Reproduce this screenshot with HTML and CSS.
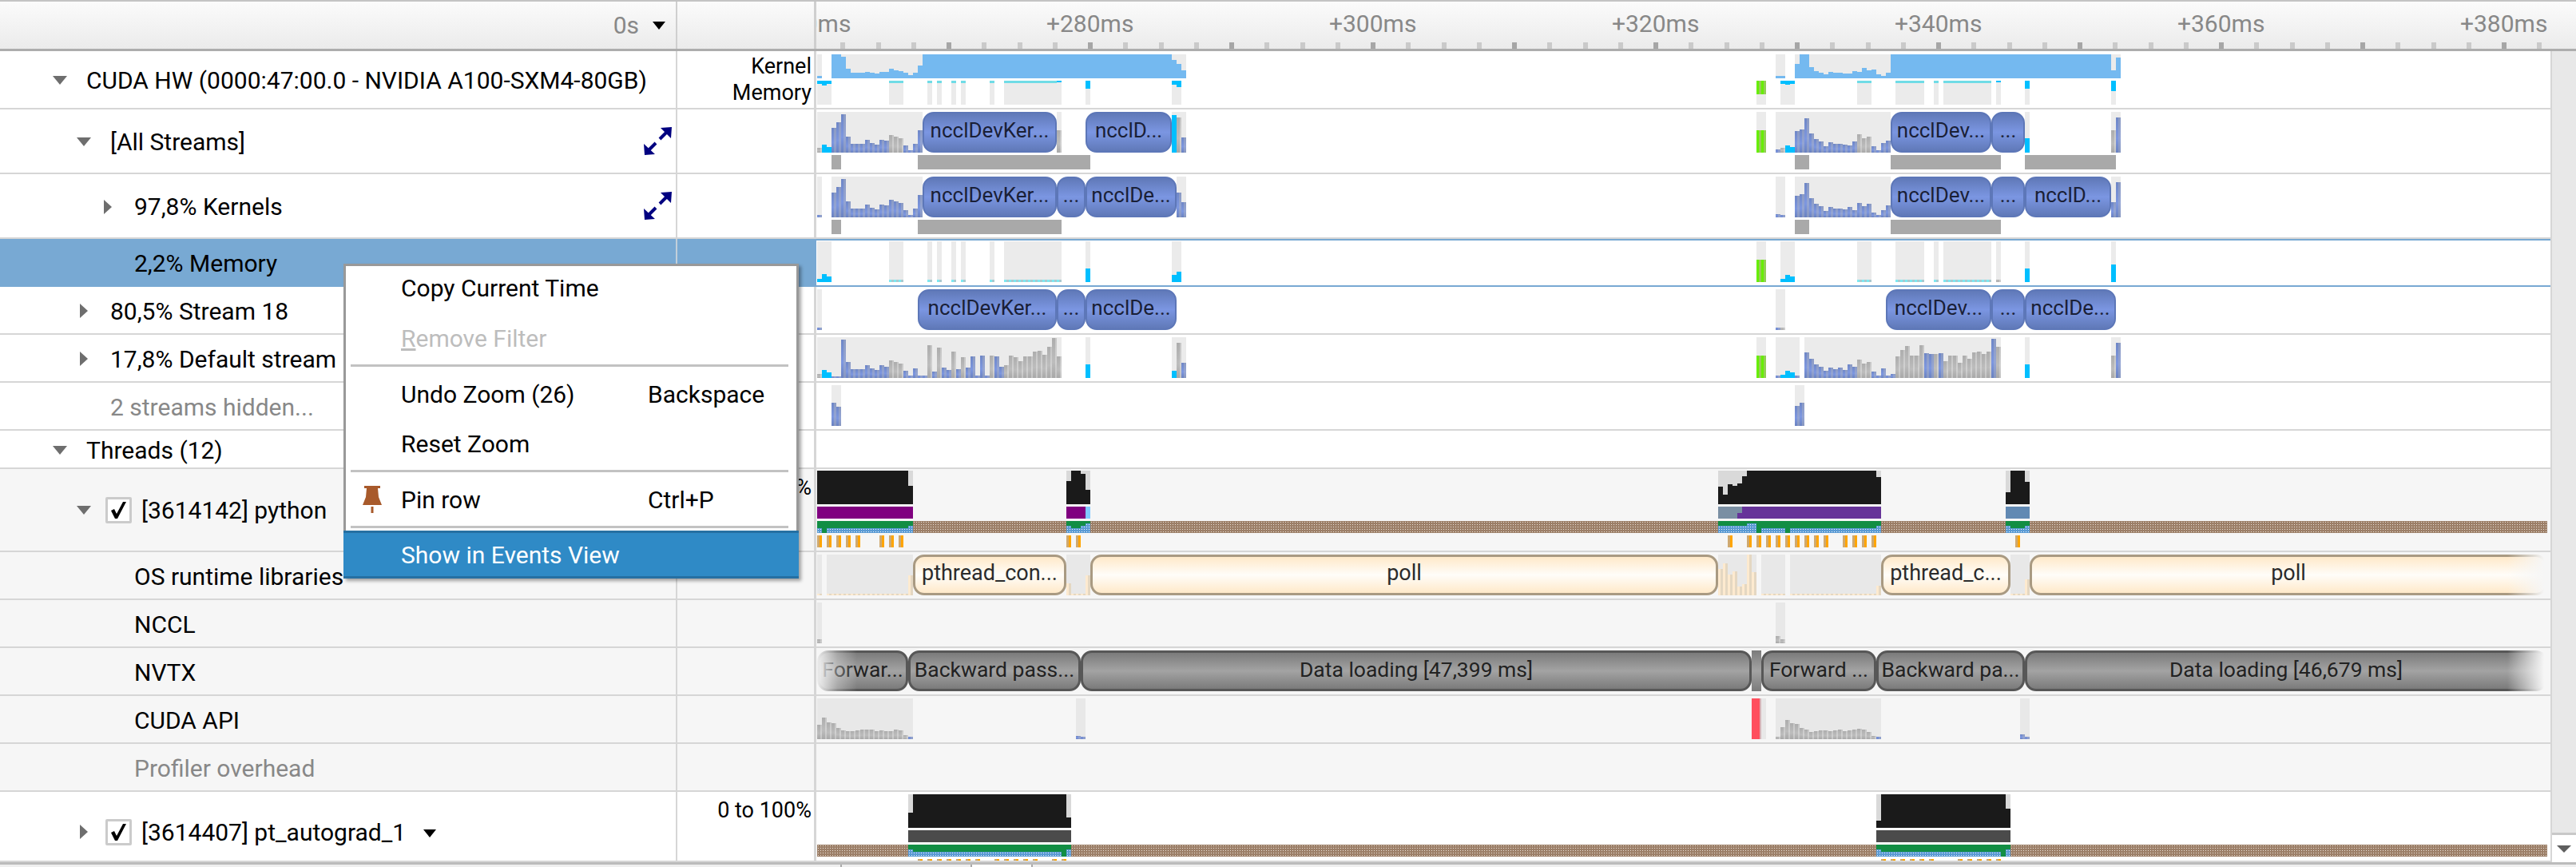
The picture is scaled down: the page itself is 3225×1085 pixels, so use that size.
FILE: index.html
```html
<!DOCTYPE html>
<html lang="en">
<head>
    <meta charset="UTF-8">
    <title>Timeline View</title>
    <link rel="stylesheet" href="styles.css">
</head>
<body>
    <div class="app">
        <div class="head">
            <div class="head-name">
                <span class="head-time">0s</span>
                <span class="caret"></span>
            </div>
            <div class="head-val"></div>
            <div class="ruler" id="ruler"></div>
        </div>

        <div class="main">
            <div class="rows">
                <div class="row h73">
                    <div class="name lvl-0"><span class="tri-box"><span class="tri-open"></span></span><span>CUDA HW (0000:47:00.0 - NVIDIA A100-SXM4-80GB)</span></div>
                    <div class="val val-mid">Kernel<br>Memory</div>
                    <div class="track pad-4" data-track="gpu"></div>
                </div>
                <div class="row h81">
                    <div class="name lvl-1">
                        <span class="tri-box"><span class="tri-open"></span></span><span>[All Streams]</span>
                        <svg class="expand" viewBox="0 0 35 35"><path d="M21 1L35 0L34 14ZM0 21L1 35L14 34Z"/><path class="expand-line" d="M28 7L20 15M7 28L15 20"/></svg>
                    </div>
                    <div class="val"></div>
                    <div class="track" data-track="allStreams"></div>
                </div>
                <div class="row h81">
                    <div class="name lvl-2">
                        <span class="tri-box"><span class="tri-closed"></span></span><span>97,8% Kernels</span>
                        <svg class="expand" viewBox="0 0 35 35"><path d="M21 1L35 0L34 14ZM0 21L1 35L14 34Z"/><path class="expand-line" d="M28 7L20 15M7 28L15 20"/></svg>
                    </div>
                    <div class="val"></div>
                    <div class="track" data-track="kernels"></div>
                </div>
                <div class="row h60 selected">
                    <div class="name lvl-2"><span class="tri-box"></span><span>2,2% Memory</span></div>
                    <div class="val"></div>
                    <div class="track" data-track="memory"></div>
                </div>
                <div class="row h60">
                    <div class="name lvl-1"><span class="tri-box"><span class="tri-closed"></span></span><span>80,5% Stream 18</span></div>
                    <div class="val"></div>
                    <div class="track" data-track="stream18"></div>
                </div>
                <div class="row h60">
                    <div class="name lvl-1"><span class="tri-box"><span class="tri-closed"></span></span><span>17,8% Default stream</span></div>
                    <div class="val"></div>
                    <div class="track" data-track="defaultStream"></div>
                </div>
                <div class="row h60">
                    <div class="name lvl-1 muted"><span class="tri-box"></span><span>2 streams hidden...</span></div>
                    <div class="val"></div>
                    <div class="track" data-track="hidden"></div>
                </div>
                <div class="row h48">
                    <div class="name lvl-0"><span class="tri-box"><span class="tri-open"></span></span><span>Threads (12)</span></div>
                    <div class="val"></div>
                    <div class="track"></div>
                </div>
                <div class="row h104 grp">
                    <div class="name name-check lvl-1">
                        <span class="tri-box tight"><span class="tri-open"></span></span>
                        <span class="check"><svg viewBox="0 0 19 21"><path d="M0 11L4 9L7 15L15 0H19L8 21H5Z"/></svg></span>
                        <span>[3614142] python</span><span class="caret caret-row"></span>
                    </div>
                    <div class="val val-top">0 to 100%</div>
                    <div class="track pad-2" data-track="python"></div>
                </div>
                <div class="row h60 grp">
                    <div class="name lvl-2"><span class="tri-box"></span><span>OS runtime libraries</span></div>
                    <div class="val"></div>
                    <div class="track" data-track="osRuntime"></div>
                </div>
                <div class="row h60 grp">
                    <div class="name lvl-2"><span class="tri-box"></span><span>NCCL</span></div>
                    <div class="val"></div>
                    <div class="track" data-track="nccl"></div>
                </div>
                <div class="row h60 grp">
                    <div class="name lvl-2"><span class="tri-box"></span><span>NVTX</span></div>
                    <div class="val"></div>
                    <div class="track" data-track="nvtx"></div>
                </div>
                <div class="row h60 grp">
                    <div class="name lvl-2"><span class="tri-box"></span><span>CUDA API</span></div>
                    <div class="val"></div>
                    <div class="track" data-track="cudaApi"></div>
                </div>
                <div class="row h60 grp">
                    <div class="name lvl-2 muted"><span class="tri-box"></span><span>Profiler overhead</span></div>
                    <div class="val"></div>
                    <div class="track"></div>
                </div>
                <div class="row h88">
                    <div class="name name-low lvl-1">
                        <span class="tri-box tight"><span class="tri-closed"></span></span>
                        <span class="check"><svg viewBox="0 0 19 21"><path d="M0 11L4 9L7 15L15 0H19L8 21H5Z"/></svg></span>
                        <span>[3614407] pt_autograd_1</span><span class="caret caret-row"></span>
                    </div>
                    <div class="val val-top">0 to 100%</div>
                    <div class="track" data-track="autograd"></div>
                </div>
            </div>
            <div class="scrollbar">
                <div class="scroll-rail"></div>
                <div class="scroll-btn"><span class="scroll-arrow"></span></div>
            </div>
        </div>

        <div class="footer">
            <span class="footer-mark"></span>
            <span class="footer-window"></span>
        </div>

        <!-- context menu for the selected row -->
        <div class="menu">
            <div class="menu-item first"><span class="menu-icon"></span><span class="menu-label">Copy Current Time</span></div>
            <div class="menu-item disabled"><span class="menu-icon"></span><span class="menu-label"><u>R</u>emove Filter</span></div>
            <div class="menu-sep"></div>
            <div class="menu-item"><span class="menu-icon"></span><span class="menu-label">Undo Zoom (26)</span><span>Backspace</span></div>
            <div class="menu-item"><span class="menu-icon"></span><span class="menu-label">Reset Zoom</span></div>
            <div class="menu-sep"></div>
            <div class="menu-item">
                <span class="menu-icon"><svg class="pin" viewBox="0 0 24 34"><path d="M2 0H22V3H19L20 14L24 24H0L4 14L5 3H2Z"/><rect x="10.5" y="26" width="3" height="8"/></svg></span>
                <span class="menu-label">Pin row</span><span>Ctrl+P</span>
            </div>
            <div class="menu-sep"></div>
            <div class="menu-item active"><span class="menu-icon"></span><span class="menu-label">Show in Events View</span></div>
        </div>
    </div>

    <script src="timeline.js"></script>
</body>
</html>
```

FILE: styles.css
```css
* {
    box-sizing: border-box;
}

body {
    margin: 0;
    background-color: #fff;
    font-family: Roboto, "Liberation Sans", sans-serif;
    font-size: 30px;
    color: #000;
    overflow: hidden;
}

.app {
    position: relative;
    display: flex;
    flex-direction: column;
    width: 3225px;
    height: 1085px;
    overflow: hidden;
}

/* header with the time ruler */
.head {
    display: flex;
    height: 64px;
    flex-shrink: 0;
    border-top: 2px solid #c4c4c4;
    border-bottom: 3px solid #adadad;
    background: linear-gradient(#fbfbfb, #ebebeb);
}

.head-name {
    display: flex;
    align-items: center;
    justify-content: flex-end;
    width: 848px;
    padding-right: 13px;
    border-right: 2px solid #cfcfcf;
}

.head-time {
    margin-right: 17px;
    color: #888;
    font-size: 30px;
}

.head-val {
    width: 174px;
    border-right: 3px solid #cfcfcf;
}

.ruler {
    position: relative;
    flex: 1;
    overflow: hidden;
}

.tick {
    position: absolute;
    bottom: 0;
    width: 6px;
    height: 8px;
    background-color: #cacaca;
}

.tick.major {
    background-color: #a6a6a6;
}

.tick-label {
    position: absolute;
    top: 10px;
    width: 160px;
    color: #888;
    font-size: 30px;
    text-align: center;
}

.caret {
    width: 0;
    height: 0;
    border-left: 8px solid transparent;
    border-right: 8px solid transparent;
    border-top: 10px solid #000;
}

.caret-row {
    margin-left: 22px;
    margin-top: 4px;
}

/* rows */
.main {
    display: flex;
    height: 1015px;
    flex-shrink: 0;
}

.rows {
    flex: 1;
    min-width: 0;
}

.row {
    display: flex;
    border-bottom: 2px solid #d6d6d6;
    overflow: hidden;
}

.h48 { height: 48px; }
.h60 { height: 60px; }
.h73 { height: 73px; }
.h81 { height: 81px; }
.h88 { height: 88px; }
.h104 { height: 104px; }

.grp {
    background-color: #f6f6f6;
}

.name {
    display: flex;
    align-items: center;
    width: 848px;
    flex-shrink: 0;
    padding-top: 2px;
    border-right: 2px solid #d6d6d6;
    white-space: nowrap;
}

.name-check {
    padding-top: 0;
}

.name-low {
    padding-top: 14px;
}

.lvl-0 { padding-left: 60px; }
.lvl-1 { padding-left: 90px; }
.lvl-2 { padding-left: 120px; }

.muted {
    color: #888;
}

.tri-box {
    display: flex;
    align-items: center;
    justify-content: center;
    width: 30px;
    margin-right: 18px;
    flex-shrink: 0;
}

.tri-box.tight {
    margin-right: 12px;
}

.tri-open {
    width: 0;
    height: 0;
    border-left: 9px solid transparent;
    border-right: 9px solid transparent;
    border-top: 11px solid #6e6e6e;
}

.tri-closed {
    width: 0;
    height: 0;
    border-top: 9px solid transparent;
    border-bottom: 9px solid transparent;
    border-left: 10px solid #6e6e6e;
}

.check {
    display: flex;
    align-items: center;
    justify-content: center;
    width: 33px;
    height: 33px;
    margin-right: 12px;
    flex-shrink: 0;
    background-color: #fff;
    border: 3px solid #cbcbcb;
    border-radius: 2px;
}

.check svg {
    width: 19px;
    height: 21px;
}

.expand {
    width: 35px;
    height: 35px;
    margin-top: -2px;
    margin-left: auto;
    margin-right: 5px;
    fill: #000080;
}

.expand-line {
    fill: none;
    stroke: #000080;
    stroke-width: 4;
}

.val {
    width: 174px;
    flex-shrink: 0;
    padding-right: 3px;
    border-right: 3px solid #d6d6d6;
    font-size: 27px;
    line-height: 33px;
    text-align: right;
}

.val-mid {
    align-self: stretch;
    padding-top: 3px;
}

.val-top {
    padding-top: 7px;
}

.selected {
    border-bottom-color: #78a9d3;
}

.selected .name {
    background-color: #78a9d3;
    border-right-color: #c2cfda;
}

.selected .val {
    background-color: #78a9d3;
    border-right-color: #78a9d3;
}

/* timeline tracks */
.track {
    display: flex;
    flex-direction: column;
    gap: 3px;
    flex: 1;
    min-width: 0;
    padding-top: 3px;
}

.pad-2 { padding-top: 2px; }
.pad-4 { padding-top: 4px; }

.selected .track {
    padding-top: 1px;
    border-top: 2px solid #78a9d3;
}

.lane {
    position: relative;
    flex-shrink: 0;
}

.lane div {
    position: absolute;
}

.lane .cell-bg { background-color: #ebebeb; }
.grp .lane .cell-bg { background-color: #e8e8e8; }
.lane .cell-bg.dark { background-color: #d9d9d9; }

.fill-gray { background-color: #a9a9a9; }
.fill-sky { background-color: #74b9f0; }
.fill-purple { background-color: #800080; }
.fill-violet { background-color: #663399; }
.fill-slate { background-color: #7a8fa3; }
.fill-steel { background-color: #6189b3; }
.fill-light { background-color: #80c8ff; }
.fill-graphite { background-color: #4b4b4b; }
.fill-mid { background: linear-gradient(#7b7b7b, #a3a3a3 50%, #7b7b7b); }

.fill-brown {
    background: radial-gradient(circle at 1.5px 1.5px, #e9dfd5 0.6px, transparent 1px) 0 0 / 3px 3px, #9c7f68;
}

.fill-dots {
    background: radial-gradient(circle at 1.5px 1.5px, #eef5fb 0.6px, transparent 1px) 0 0 / 3px 3px, #5a9ad4;
}

.fill-tick {
    background: linear-gradient(90deg, #cfa970 50%, #ffa500 50%);
}

.bar-k { background-color: #74b9f0; }
.bar-b {
    background: linear-gradient(90deg, transparent 50%, rgba(190, 190, 190, 0.35) 50%),
        linear-gradient(#6f87c6, #7d97e0 60%, #6a82c0);
}
.bar-g {
    background: linear-gradient(90deg, transparent 67%, rgba(255, 255, 255, 0.3) 67%),
        linear-gradient(#adadad, #bdbdbd 60%, #a8a8a8);
}
.bar-c { background-color: #00bfff; }
.bar-t { background-color: #70dce6; }
.bar-d { background: repeating-linear-gradient(90deg, #7fe8f0 0 3px, #a9c9cf 3px 6px); }
.bar-l { background: linear-gradient(90deg, #66ee00 50%, #93cf55 50%); }
.bar-x { background-color: #1a1a1a; }
.bar-n { background-color: #128e44; }
.bar-v { background-color: #663399; }
.bar-e { background: linear-gradient(90deg, #fdeacf 50%, #e4d7c2 50%); }
.bar-r { background-color: #ff4f5e; }
.bar-q { background: linear-gradient(90deg, #ff4f5e 60%, #d8b4b8 60%); }

.chip {
    display: flex;
    align-items: center;
    justify-content: center;
    top: 0;
    bottom: 0;
    padding: 0 0 5px;
    overflow: hidden;
    font-size: 26px;
    white-space: nowrap;
    border-radius: 14px;
}

.chip-blue {
    color: #1a2036;
    background: linear-gradient(#6079b8, #7b96e2 50%, #6079b8);
    border: 2px solid #5d77b8;
}

.chip-cream {
    color: #2b2b2b;
    font-size: 27px;
    background: linear-gradient(#ffe9c9, #fffdf9 50%, #ffe9c9);
    border: 3px solid #a99a82;
}

.chip-gray {
    color: #222;
    font-size: 26.5px;
    background: linear-gradient(#7b7b7b, #a3a3a3 50%, #7b7b7b);
    border: 3px solid #575757;
}

/* the chips that run off the visible range fade out into the row */
.lane .fade-left,
.lane .fade-right {
    top: 0;
    bottom: 0;
    width: 50px;
}

.fade-left {
    background: linear-gradient(90deg, rgba(246, 246, 246, 0.95), rgba(246, 246, 246, 0.35) 50%, rgba(246, 246, 246, 0));
}

.fade-right {
    background: linear-gradient(270deg, #f6f6f6 8%, rgba(246, 246, 246, 0));
}

/* vertical scrollbar */
.scrollbar {
    display: flex;
    flex-direction: column;
    width: 32px;
    flex-shrink: 0;
    border-left: 2px solid #d6d6d6;
}

.scroll-rail {
    flex: 1;
    background-color: #e8e8e8;
    border-bottom: 3px solid #c8c8c8;
}

.scroll-btn {
    display: flex;
    align-items: center;
    justify-content: center;
    height: 34px;
    background-color: #fff;
}

.scroll-arrow {
    width: 0;
    height: 0;
    border-left: 9px solid transparent;
    border-right: 9px solid transparent;
    border-top: 9px solid #5e5e5e;
}

.footer {
    position: relative;
    height: 6px;
    background-color: #efefef;
    border-top: 3px solid #bbb;
}

.footer-mark {
    position: absolute;
    left: 1052px;
    top: 0;
    width: 2px;
    height: 3px;
    background-color: #aaa;
}

.footer-window {
    position: absolute;
    left: 1215px;
    top: 0;
    width: 78px;
    height: 3px;
    background-color: #fff;
    border-left: 2px solid #aaa;
    border-right: 2px solid #aaa;
}

/* context menu */
.menu {
    position: absolute;
    left: 430px;
    top: 330px;
    width: 570px;
    background-color: #fff;
    border: 3px solid #999;
    border-bottom: none;
    box-shadow: 3px 3px 4px rgba(0, 0, 0, 0.35);
    font-size: 30px;
}

.menu-item {
    display: flex;
    align-items: center;
    height: 62px;
}

.menu-item.first {
    height: 58px;
    margin-bottom: 1px;
    padding-bottom: 4px;
}

.menu-icon {
    display: flex;
    width: 69px;
    padding-left: 21px;
    flex-shrink: 0;
}

.menu-label {
    width: 309px;
    flex-shrink: 0;
}

.disabled {
    color: #bdbdbd;
}

.menu-sep {
    height: 3px;
    margin: 2px 10px 3px 6px;
    background-color: #c2c2c2;
}

.pin {
    width: 24px;
    height: 34px;
    flex-shrink: 0;
    fill: #a85a2b;
}

.menu-item.active {
    height: 60px;
    margin: 0 -3px;
    padding: 0 3px;
    color: #fff;
    background-color: #2f8ac6;
    border-top: 3px solid #2670a3;
    border-bottom: 3px solid #2670a3;
}
```

FILE: timeline.js
```js
// Timeline tracks: everything sits on a grid of 6px buckets starting 1px into the track
const BUCKET = 6;
const TICK_STEP = 44.25;
const RULER_LEFT = 1022;
const FADE_WIDTH = 50;

function bucketX(b) {
    return 1 + b * BUCKET;
}

function rep(token, n) {
    return Array(n).fill(token).join(' ');
}

function add(parent, cls, style) {
    const d = document.createElement('div');
    d.className = cls;
    Object.assign(d.style, style);
    parent.appendChild(d);
    return d;
}

function span(a, b) {
    return { left: bucketX(a) + 'px', width: (b - a) * BUCKET + 'px' };
}

// memory activity is repeated on the gpu row and on the memory row
const MEM_BG = [[0, 3], [15, 18], [23, 24], [25, 26], [28, 29], [30, 31], [36, 37], [39, 51], [56, 57], [74, 76],
    [196, 198], [201, 204], [217, 220], [225, 231], [233, 234], [235, 245], [246, 247], [252, 253], [270, 271]];

const KERNEL_A = 'b31 b38 b48 b20 b11 b11 b11 b16 b12 b10 b16 b15';
const KERNEL_B = 'b27 b29 b43 b24 b17 b14 b8 b13 b11 b11 b10';

const TRACKS = {
    gpu: [
        {
            h: 30,
            bg: [[0, 1], [3, 22], [74, 77], [200, 202], [204, 224], [270, 272]],
            fills: [[22, 74, 'sky'], [224, 270, 'sky']],
            bars: [
                [0, 'k3'],
                [3, 'k30 k30 k27 k12 k7 k7 k7 k8 k7 k6 k8 k8 k12 k10 k9 k7 k4 k7 k16'],
                [74, 'k23 k18 k10'],
                [200, 'k3 k3'],
                [204, 'k18 k30 k30 k14 k9 k7 k5 k8 k7 k7 k6 k6 k9 k8 k13 k10 k11 k5 k3 k7'],
                [270, 'k10 k26']
            ]
        },
        {
            h: 30,
            fromTop: true,
            bg: MEM_BG,
            bars: [
                [0, 'c4 c6 c4'], [15, rep('t3', 3)], [23, 't3'], [25, 't3'], [28, 't3'], [30, 't3'], [36, 't3'],
                [39, rep('t3', 11)], [50, 'c2'], [56, 'c10'], [74, 'c5 c8'],
                [196, 'l17 l17'], [201, 'c4 c5 c4'], [217, rep('t3', 3)], [225, rep('t3', 6)], [233, 't3'],
                [235, rep('t3', 10)], [246, 'c2'], [252, 'c10'], [270, 'c13']
            ]
        }
    ],
    allStreams: [
        {
            h: 51,
            bg: [[0, 22], [50, 51], [74, 77], [196, 198], [200, 224], [252, 253], [270, 272]],
            bars: [
                [0, 'g6 c10 c7 ' + KERNEL_A + ' g22 g20 g18 b9 b3 b11 b28'],
                [50, 'g28'], [74, 'c47 g44 b19'], [196, 'l28 l28'],
                [200, 'b4 g6 c9 c7 ' + KERNEL_B + ' b9 b14 g23 g18 g20 b8 b3 b12 b15'],
                [252, 'c18'], [270, 'g28 b44']
            ],
            chips: [[22, 50, 'ncclDevKer...'], [56, 74, 'ncclD...'], [224, 245, 'ncclDev...'], [245, 252, '...']]
        },
        {
            h: 18,
            fills: [[3, 5, 'gray'], [21, 57, 'gray'], [204, 207, 'gray'], [224, 247, 'gray'], [252, 271, 'gray']]
        }
    ],
    kernels: [
        {
            h: 51,
            bg: [[0, 1], [3, 22], [75, 77], [200, 202], [204, 224], [270, 272]],
            bars: [
                [0, 'b3'],
                [3, KERNEL_A + ' b22 b20 b18 b9 b3 b11 b28'],
                [75, 'b31 b19'], [200, 'b4 b3'],
                [204, KERNEL_B + ' b13 b9 b18 b14 b17 b6 b3 b9 b15'],
                [270, 'b19 b44']
            ],
            chips: [[22, 50, 'ncclDevKer...'], [50, 56, '...'], [56, 75, 'ncclDe...'],
                [224, 245, 'ncclDev...'], [245, 252, '...'], [252, 270, 'ncclD...']]
        },
        {
            h: 18,
            fills: [[3, 5, 'gray'], [21, 51, 'gray'], [204, 207, 'gray'], [224, 247, 'gray']]
        }
    ],
    memory: [
        {
            h: 51,
            bg: MEM_BG,
            bars: [
                [0, 'c4 c10 c7'], [15, rep('d3', 3)], [23, 'd3'], [25, 'd3'], [28, 'd3'], [30, 'd3'], [36, 'd3'],
                [39, rep('d3', 12)], [56, 'c17'], [74, 'c9 c13'],
                [196, 'l28 l28'], [201, 'c4 c9 c7'], [217, rep('d3', 3)], [225, rep('d3', 6)], [233, 'd3'],
                [235, rep('d3', 10)], [246, 'g3'], [252, 'c17'], [270, 'c22']
            ]
        }
    ],
    stream18: [
        {
            h: 51,
            bg: [[0, 1], [200, 202]],
            bars: [[0, 'b3'], [200, 'b3 g3']],
            chips: [[21, 50, 'ncclDevKer...'], [50, 56, '...'], [56, 75, 'ncclDe...'],
                [223, 245, 'ncclDev...'], [245, 252, '...'], [252, 271, 'ncclDe...']]
        }
    ],
    defaultStream: [
        {
            h: 51,
            bg: [[0, 51], [56, 57], [74, 77], [196, 198], [200, 205], [206, 247], [252, 253], [270, 272]],
            bars: [
                [0, 'g5 c10 c7 b2 b2 b48 b20 b11 b11 b11 b16 b12 b10 b16 b14 g22 g20 g18 b9 b3 b12 b3 b3 g41 b8 g38 b13 b10 ' +
                    'g33 b11 g26 b13 b27 b3 b28 b3 g28 b27 b14 g16 g28 g26 g21 g27 g27 g33 g34 g29 g39 g50 g27'],
                [56, 'c17'], [74, 'c9 g44 b19'], [196, 'l28 l28'], [200, 'b3 c4 c9 c7 b3'],
                [206, 'b32 b24 b17 b14 b9 b13 b11 b13 b10 b17 b14 g23 g18 g20 b8 b3 b12 b3 b5 g27 g35 g40 g28 g28 g41 ' +
                    'b31 b30 g30 b31 g21 g28 g28 g19 g28 g24 g32 g33 g30 g33 b49 g39'],
                [252, 'c17'], [270, 'g28 b44']
            ]
        }
    ],
    hidden: [
        {
            h: 51,
            bg: [[3, 5], [204, 206]],
            bars: [[3, 'b29 b24'], [204, 'b25 b29']]
        }
    ],
    python: [
        {
            h: 42,
            bgClass: 'dark',
            bg: [[0, 20], [52, 57], [188, 222], [248, 253]],
            bars: [
                [0, rep('x42', 19) + ' x23'],
                [52, 'x29 x42 x42 x38 x18'],
                [188, 'x22 x12 x25 x23 x26 x35 ' + rep('x42', 27) + ' x34'],
                [248, 'x15 x42 x42 x42 x28']
            ]
        },
        {
            h: 15,
            fills: [[0, 20, 'purple'], [52, 56, 'purple'], [56, 57, 'light'], [188, 193, 'slate'], [193, 222, 'violet'], [248, 253, 'steel']],
            bars: [[192, 'v7']]
        },
        {
            h: 15,
            fromTop: true,
            fills: [[0, 20, 'dots'], [20, 52, 'brown'], [52, 57, 'dots'], [57, 188, 'brown'], [188, 222, 'dots'],
                [222, 248, 'brown'], [248, 253, 'dots'], [253, 361, 'brown']],
            bars: [
                [0, 'n9 n15 ' + rep('n9', 17) + ' n6'],
                [52, 'n6 n9 n9 n6 n3'],
                [188, rep('n6', 6) + ' n3 n3 n15 ' + rep('n9', 5) + ' n15 ' + rep('n9', 18) + ' n6'],
                [248, 'n6 n9 n9 n9 n6']
            ]
        },
        {
            h: 15,
            ticks: [0, 2, 4, 6, 8, 13, 15, 17, 52, 54, 190, 194, 196, 198, 200, 202, 204, 206, 208, 210, 214, 216, 218, 220, 250]
        }
    ],
    osRuntime: [
        {
            h: 51,
            bg: [[0, 1], [2, 20], [52, 57], [188, 196], [197, 202], [203, 222], [249, 253]],
            bars: [
                [0, 'e2'], [2, rep('e2', 17) + ' e25'], [52, 'e15 e2 e2 e2 e25'],
                [188, 'e33 e40 e26 e30 e11 e14 e51 e29'], [197, rep('e2', 5)],
                [203, rep('e2', 18) + ' e12'], [249, 'e2 e2 e2 e20']
            ],
            chipClass: 'cream',
            chips: [[20, 52, 'pthread_con...'], [57, 188, 'poll'], [222, 249, 'pthread_c...'], [253, 361, 'poll', 'fade-right']]
        }
    ],
    nccl: [
        {
            h: 51,
            bg: [[0, 1], [200, 202]],
            bars: [[0, 'g5'], [200, 'g9 g5']]
        }
    ],
    nvtx: [
        {
            h: 51,
            fills: [[195, 197, 'mid']],
            chipClass: 'gray',
            chips: [[0, 19, 'Forwar...', 'fade-left'], [19, 55, 'Backward pass...'], [55, 195, 'Data loading [47,399 ms]'],
                [197, 221, 'Forward ...'], [221, 252, 'Backward pa...'], [252, 361, 'Data loading [46,679 ms]', 'fade-right']]
        }
    ],
    cudaApi: [
        {
            h: 51,
            bg: [[0, 20], [54, 56], [196, 198], [200, 222], [251, 253]],
            bars: [
                [0, 'g18 g27 g21 g20 g14 g11 g10 g10 g11 g12 g12 g12 g10 g11 g10 g10 g12 g11 g5 b3'],
                [54, 'b4 b3'], [195, 'r51 q51'],
                [200, 'g3 g15 g24 g20 g19 g14 g12 g9 g10 g11 g11 g10 g11 g12 g10 g11 g12 g13 g12 g9 g4 b3'],
                [251, 'b6 b3']
            ]
        }
    ],
    autograd: [
        {
            h: 42,
            bgClass: 'dark',
            bg: [[19, 53], [221, 249]],
            bars: [
                [19, 'x19 ' + rep('x42', 32) + ' x13'],
                [221, 'x9 ' + rep('x42', 26) + ' x24']
            ]
        },
        {
            h: 15,
            fills: [[19, 53, 'graphite'], [221, 249, 'graphite']]
        },
        {
            h: 15,
            fromTop: true,
            fills: [[0, 19, 'brown'], [19, 53, 'dots'], [53, 221, 'brown'], [221, 249, 'dots'], [249, 361, 'brown']],
            bars: [
                [19, 'n6 ' + rep('n9', 31) + ' n15 n6'],
                [221, 'n6 ' + rep('n9', 25) + ' n15 n6']
            ]
        },
        {
            h: 15,
            ticks: [21, 23, 25, 27, 29, 31, 33, 37, 39, 41, 43, 45, 49, 51,
                222, 224, 226, 228, 230, 232, 238, 240, 242, 244, 246]
        }
    ]
};

function drawBars(lane, start, tokens, fromTop) {
    tokens.split(' ').forEach(function (token, i) {
        const style = span(start + i, start + i + 1);
        style.height = token.slice(1) + 'px';
        style[fromTop ? 'top' : 'bottom'] = '0';
        add(lane, 'bar-' + token[0], style);
    });
}

function drawChip(lane, chip, kind) {
    const box = add(lane, 'chip chip-' + kind, span(chip[0], chip[1]));
    box.textContent = chip[2];
    if (chip[3] === 'fade-left') {
        add(lane, 'fade-left', { left: bucketX(chip[0]) + 'px' });
    } else if (chip[3] === 'fade-right') {
        add(lane, 'fade-right', { left: bucketX(chip[1]) - FADE_WIDTH + 'px' });
    }
}

function drawLane(track, spec) {
    const lane = add(track, 'lane', { height: spec.h + 'px' });
    (spec.bg || []).forEach(function (r) {
        const style = span(r[0], r[1]);
        style.top = '0';
        style.bottom = '0';
        add(lane, 'cell-bg ' + (spec.bgClass || ''), style);
    });
    (spec.fills || []).forEach(function (r) {
        const style = span(r[0], r[1]);
        style.top = '0';
        style.bottom = '0';
        add(lane, 'fill-' + r[2], style);
    });
    (spec.ticks || []).forEach(function (b) {
        const style = span(b, b + 1);
        style.top = '0';
        style.bottom = '0';
        add(lane, 'fill-tick', style);
    });
    (spec.bars || []).forEach(function (r) {
        drawBars(lane, r[0], r[1], spec.fromTop);
    });
    (spec.chips || []).forEach(function (c) {
        drawChip(lane, c, spec.chipClass || 'blue');
    });
}

function drawRuler() {
    const ruler = document.getElementById('ruler');
    for (let k = -33; k < 18; k++) {
        const x = Math.round(2427 + k * TICK_STEP) - RULER_LEFT;
        if (x < 0 || x > 2170) continue;
        add(ruler, k % 4 === 0 ? 'tick major' : 'tick', { left: x - 3 + 'px' });
    }
    // one label every 20ms, the first is cut off by the left edge
    for (let ms = 260; ms <= 380; ms += 20) {
        const x = 1364.7 + (ms - 280) * 17.7 - RULER_LEFT;
        const label = add(ruler, 'tick-label', { left: x - 80 + 'px' });
        label.textContent = '+' + ms + 'ms';
    }
}

document.querySelectorAll('[data-track]').forEach(function (track) {
    TRACKS[track.dataset.track].forEach(function (spec) {
        drawLane(track, spec);
    });
});

drawRuler();
```
